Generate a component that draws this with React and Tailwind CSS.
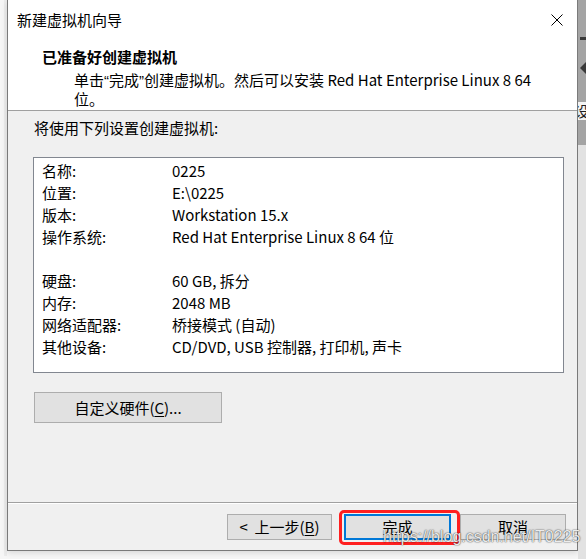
export default function App() {
  const rows = [
    ["名称:", "0225"],
    ["位置:", "E:\\0225"],
    ["版本:", "Workstation 15.x"],
    ["操作系统:", "Red Hat Enterprise Linux 8 64 位"],
    ["", ""],
    ["硬盘:", "60 GB, 拆分"],
    ["内存:", "2048 MB"],
    ["网络适配器:", "桥接模式 (自动)"],
    ["其他设备:", "CD/DVD, USB 控制器, 打印机, 声卡"],
  ];
  const q = "font-['Liberation_Sans',sans-serif]";
  return (
    <div className="w-[586px] h-[559px] flex bg-[#f6f6f6] overflow-hidden relative font-['Noto_Sans_CJK_SC',sans-serif] text-[15px] text-black">
      <div className="w-[7px] shrink-0 flex justify-end">
        <div className="w-[3px] h-[556px] bg-[#ececec]" />
      </div>
      <div className="w-[571px] h-[551px] shrink-0 border-x border-b border-[#7a7a7a] bg-[#f0f0f0] flex flex-col shadow-[0_2px_6px_rgba(0,0,0,0.12)]">
        {/* Header */}
        <div className="h-[111px] shrink-0 bg-white border-b border-[#a0a0a0] flex flex-col">
          <div className="h-[40px] flex items-center justify-between pl-[9px] pr-[14px]">
            <span className="leading-[20px]">新建虚拟机向导</span>
            <svg width="12" height="12" viewBox="0 0 12 12" className="shrink-0">
              <path d="M0.5 0.5 L11.5 11.5 M11.5 0.5 L0.5 11.5" stroke="#000" strokeWidth="1" fill="none" />
            </svg>
          </div>
          <div className="pl-[34px] mt-[7px] leading-[20px] font-bold">已准备好创建虚拟机</div>
          <div className="pl-[66px] mt-[4px] leading-[18px]">
            单击<span className={q}>“</span>完成<span className={q}>”</span>创建虚拟机。然后可以安装 Red Hat Enterprise Linux 8 64
            <br />
            位。
          </div>
        </div>
        {/* Body */}
        <div className="flex-1 flex flex-col pl-[25px] pt-[7px]">
          <div className="pl-[1px] leading-[20px]">将使用下列设置创建虚拟机:</div>
          <div className="mt-[19px] w-[531px] h-[216px] border border-[#828790] bg-white pt-[2px] pl-[8px] flex flex-col">
            {rows.map(([k, v], i) => (
              <div key={i} className="h-[22px] flex items-center leading-[22px]">
                <span className="w-[130px] shrink-0">{k}</span>
                <span>{v}</span>
              </div>
            ))}
          </div>
          <div className="mt-[19px] ml-[1px] w-[188px] h-[31px] bg-[#e1e1e1] border border-[#adadad] flex items-center justify-center leading-[20px]">
            <span>
              自定义硬件(<span className="underline underline-offset-2">C</span>)...
            </span>
          </div>
        </div>
        {/* Footer */}
        <div className="h-[48px] shrink-0 border-t border-[#a0a0a0] flex flex-col">
          <div className="h-[1px] bg-white" />
          <div className="flex justify-end pr-[11px] pt-[10px]">
            <div className="w-[105px] h-[26px] bg-[#e1e1e1] border border-[#adadad] flex items-center justify-center leading-[20px]">
              <span className="whitespace-pre">
                {"<  上一步("}<span className="underline underline-offset-2">B</span>)
              </span>
            </div>
            <div className="ml-[12px] w-[107px] h-[26px] bg-[#e1e1e1] border-2 border-[#0078d7] flex items-center justify-center leading-[20px]">
              完成
            </div>
            <div className="ml-[9px] w-[106px] h-[26px] bg-[#e1e1e1] border border-[#adadad] flex items-center justify-center leading-[20px]">
              取消
            </div>
          </div>
        </div>
      </div>
      {/* Background strip at right */}
      <div className="w-[8px] shrink-0 flex flex-col">
        <div className="h-[145px] bg-[#a4a4a4] flex flex-col items-end">
          <div className="mt-[37px] w-[6px] h-[3px] bg-[#3a3a3a]" />
          <div className="mt-[22px] w-0 h-0 border-y-[6px] border-y-transparent border-r-[6px] border-r-[#3a3a3a]" />
          <div className="mt-[28px] w-[8px] h-[18px] bg-[#f4f4f4] overflow-hidden flex items-center">
            <span className="text-[15px] leading-[18px] -ml-[4px] text-[#222]">设</span>
          </div>
        </div>
        <div className="flex-1 bg-[#e2e2e2]" />
      </div>
      {/* Annotation: red highlight */}
      <div className="absolute left-[339px] top-[510px] w-[121px] h-[35px] border-[3px] border-[#ff1f1f] rounded-[5px]" />
      {/* Watermark */}
      <div className="absolute left-[383px] top-[527px] font-['Liberation_Sans',Arial,sans-serif] text-[16px] leading-[20px] text-white/90 [text-shadow:0_0_1px_rgba(0,0,0,0.8),0_0_2px_rgba(0,0,0,0.45)]">
        https://blog.csdn.net/IT0225
      </div>
    </div>
  );
}
